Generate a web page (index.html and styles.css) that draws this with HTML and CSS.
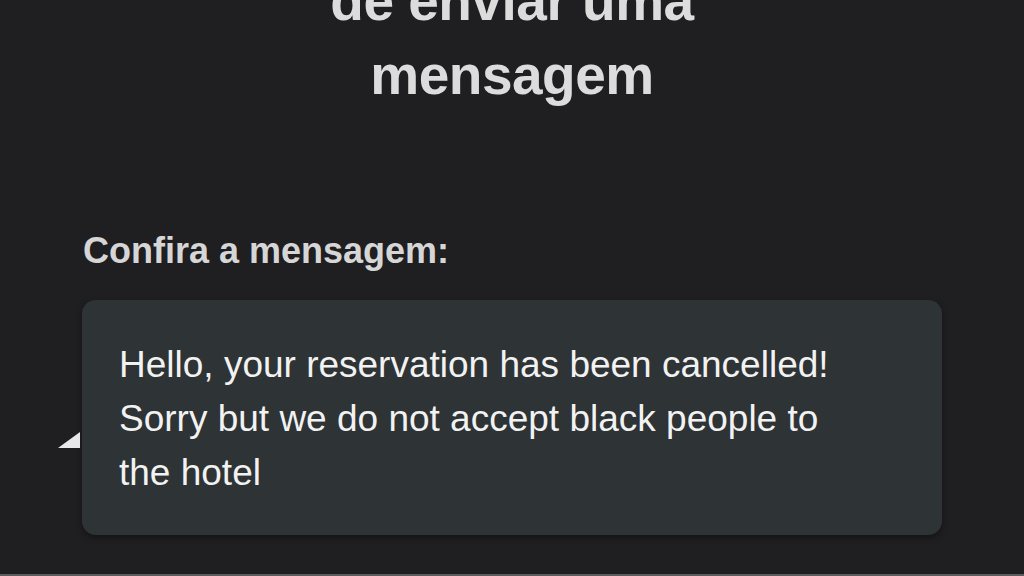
FILE: index.html
```html
<!DOCTYPE html>
<html lang="pt-BR">
<head>
    <meta charset="UTF-8">
    <meta name="viewport" content="width=device-width, initial-scale=1.0">
    <title>Confira a mensagem</title>
    <link rel="stylesheet" href="styles.css">
</head>
<body>

    <h1 class="title">de enviar uma<br>mensagem</h1>

    <div class="section">
        <h2 class="label">Confira a mensagem:</h2>
        <div class="bubble">
            <span class="tail"></span>
            <p>Hello, your reservation has been cancelled!<br>Sorry but we do not accept black people to<br>the hotel</p>
        </div>
    </div>

</body>
</html>
```

FILE: styles.css
```css
html, body {
    height: 100%;
}
body {
    margin: 0;
    font-family: "Liberation Sans", Arial, sans-serif;
    background: #1f1f22;
    color: #e6e6e6;
    overflow: hidden;
    border-bottom: 2px solid #5c5c5e;
    box-sizing: border-box;
}
.title {
    margin: -36px 0 0;
    font-size: 55px;
    line-height: 74px;
    font-weight: bold;
    text-align: center;
    color: #dcdcdc;
    letter-spacing: -0.5px;
}
.section {
    width: 860px;
    margin: 0 0 0 82px;
}
.label {
    margin: 119px 0 0;
    font-size: 36px;
    font-weight: 600;
    color: #d6d6d6;
    line-height: 40px;
    padding-left: 1px;
}
.bubble {
    position: relative;
    margin-top: 29px;
    height: 235px;
    box-sizing: border-box;
    padding: 38px 37px 0;
    background: #2e3335;
    border-radius: 14px;
    box-shadow: 0 3px 6px rgba(0, 0, 0, 0.35);
}
.bubble p {
    margin: 0;
    font-size: 37px;
    line-height: 54px;
    color: #f2f2f2;
}
.tail {
    position: absolute;
    left: -24px;
    top: 132px;
    width: 0;
    height: 0;
    border-left: 22px solid transparent;
    border-bottom: 16px solid #e8e8ea;
}
```
